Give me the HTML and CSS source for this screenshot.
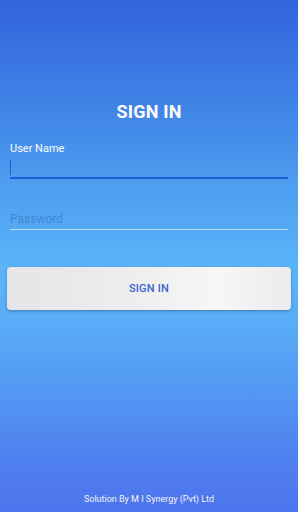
FILE: index.html
```html
<!DOCTYPE html>
<html>
<head>
<meta charset="utf-8">
<link rel="stylesheet" href="styles.css">
</head>
<body>
<div class="screen">
  <h1 class="title">SIGN IN</h1>
  <div class="field active">
    <label class="label">User Name</label>
    <div class="input"><span class="caret"></span></div>
  </div>
  <div class="field">
    <div class="input placeholder">Password</div>
  </div>
  <button class="btn">SIGN IN</button>
  <div class="spacer"></div>
  <div class="footer">Solution By M I Synergy (Pvt) Ltd</div>
</div>
</body>
</html>
```
FILE: styles.css
```css
html, body { margin: 0; padding: 0; }
body { font-family: Roboto, "Noto Sans", sans-serif; }
.screen {
  width: 298px; height: 512px; box-sizing: border-box;
  display: flex; flex-direction: column;
  padding: 0 10px;
  background: linear-gradient(180deg, #3264dc 0%, #3f82e6 20%, #4d9cef 35%, #5ab4f8 52%, #59aef7 62%, #549af4 75%, #5083f0 88%, #4d74ed 100%);
}
.title {
  margin: 101px 0 0; text-align: center; color: #fff;
  font-size: 18px; font-weight: 700; line-height: 22px; letter-spacing: 0.2px;
}
.field { margin-top: 19px; }
.label { display: block; color: #fff; font-size: 11px; line-height: 13px; }
.input {
  height: 20px; border-bottom: 1px solid rgba(255,255,255,0.55);
  display: flex; align-items: center;
}
.field.active .input { height: 19px; margin-top: 3px; border-bottom: 2px solid #1b5fd8; }
.caret { width: 1px; height: 15px; background: #1b5fd8; }
.field + .field { margin-top: 30px; }
.placeholder { color: #3f86d2; font-size: 12px; line-height: 14px; height: 20px; }
.btn {
  margin: 37px -3px 0; height: 43px; border: none; border-radius: 4px;
  background: linear-gradient(90deg, #e6e6e8 0%, #ececee 40%, #f7f7f8 75%, #ebebed 100%);
  box-shadow: 0 1px 3px rgba(0,0,0,0.3);
  color: #3d5fd0; font-family: Roboto, sans-serif; font-size: 11px; font-weight: 500;
  letter-spacing: 0.2px;
}
.spacer { flex: 1; }
.footer { text-align: center; color: #f2f4ff; font-size: 9px; line-height: 11px; margin-bottom: 7px; }
```
